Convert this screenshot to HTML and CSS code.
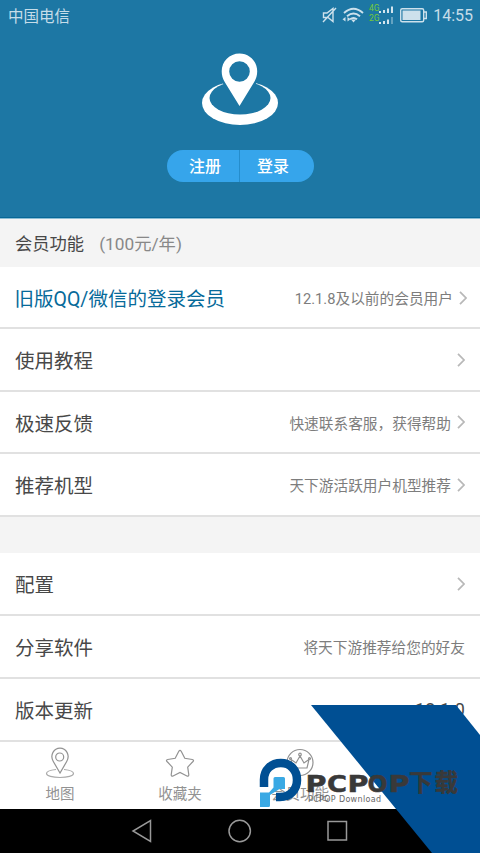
FILE: index.html
```html
<!DOCTYPE html>
<html lang="zh-CN">
<head>
<meta charset="utf-8">
<title>会员功能</title>
<link rel="stylesheet" href="styles.css">
</head>
<body>
<div class="phone">
  <header class="hero">
    <div class="status">
      <span>中国电信</span>
      <svg class="status-icons" width="108" height="32" viewBox="0 0 108 32">
        <g fill="none" stroke="#cde1ec" stroke-width="1.4">
          <path d="M3.500 13h3.500l6-4.500v13l-5-4H3.500zM3 22L16 8"/>
          <path d="M24 13q9.500-8.500 19 0M27 16.300q6.500-5.500 13 0M30 19.300q3.500-2.800 7 0" stroke-width="1.900"/>
        </g>
        <path d="M31 19.500h5l-2.500 3zM25.500 17v4.500l-3-2.300zM27.500 17v4.500l3-2.300z" fill="#cde1ec"/>
        <text x="49" y="10.500" class="net">4G</text>
        <text x="49" y="21" class="net">2G</text>
        <g fill="#d3e5ee">
          <path d="M59 11h2v2h-2zM63 10h2v3h-2zM67 8.500h2V13h-2zM71 6.500h2V13h-2zM59 22h2v2h-2zM63 21h2v3h-2zM67 19.500h2V24h-2z"/>
          <path d="M71 17h2v7h-2z" opacity=".4"/>
        </g>
        <rect x="80.700" y="8.700" width="23" height="13" rx="1.500" fill="none" stroke="#cde1ec" stroke-width="1.400"/>
        <path d="M82.500 10.500h18v9.500h-18z" fill="#cde1ec"/>
        <path d="M104 12h2.300v6.500H104" fill="none" stroke="#cde1ec" stroke-width="1.400"/>
      </svg>
      <span class="time">14:55</span>
    </div>
    <svg class="logo" width="76" height="72" viewBox="0 0 76 72">
      <ellipse cx="38" cy="49" rx="38" ry="22" fill="#fff"/>
      <ellipse cx="38" cy="44" rx="30.500" ry="16.500" fill="#1d77a4"/>
      <path d="M37.500-1C26.500-1 18 7.500 18 18c0 4 1 7.500 3 11.500L37.500 56 54 29.500c2-4 3-7.500 3-11.500C57 7.500 48.500-1 37.500-1z" fill="#1d77a4"/>
      <path fill-rule="evenodd" d="M37.500-.5C27.500-.5 19.700 7.500 19.700 17.200c0 4 1.100 7.500 3 10.800L37.500 52 52.200 28c1.900-3.300 3-6.800 3-10.800C55.200 7.500 47.500-.5 37.500-.5zm0 7.700a10.300 10.300 0 1 1 0 20.600 10.300 10.300 0 0 1 0-20.600z" fill="#fff"/>
    </svg>
    <div class="auth"><span>注册</span><span>登录</span></div>
  </header>

  <div class="section"><b>会员功能</b><span>(100元/年)</span></div>
  <main>
    <div class="row first">
      <span class="name link">旧版QQ/微信的登录会员</span><span class="detail">12.1.8及以前的会员用户</span>
      <svg class="chev" width="8" height="14" viewBox="0 0 8 14"><path d="M1 .8l6 6.200-6 6.200"/></svg>
    </div>
    <div class="row">
      <span class="name">使用教程</span><span class="detail"></span>
      <svg class="chev" width="8" height="14" viewBox="0 0 8 14"><path d="M1 .8l6 6.200-6 6.200"/></svg>
    </div>
    <div class="row short">
      <span class="name">极速反馈</span><span class="detail">快速联系客服，获得帮助</span>
      <svg class="chev" width="8" height="14" viewBox="0 0 8 14"><path d="M1 .8l6 6.200-6 6.200"/></svg>
    </div>
    <div class="row">
      <span class="name">推荐机型</span><span class="detail">天下游活跃用户机型推荐</span>
      <svg class="chev" width="8" height="14" viewBox="0 0 8 14"><path d="M1 .8l6 6.200-6 6.200"/></svg>
    </div>
    <div class="gap"></div>
    <div class="row">
      <span class="name">配置</span><span class="detail"></span>
      <svg class="chev" width="8" height="14" viewBox="0 0 8 14"><path d="M1 .8l6 6.200-6 6.200"/></svg>
    </div>
    <div class="row"><span class="name">分享软件</span><span class="detail">将天下游推荐给您的好友</span></div>
    <div class="row"><span class="name">版本更新</span><span class="detail version">12.1.0</span></div>
  </main>

  <nav class="tabs">
    <div class="tab">
      <svg width="30" height="32" viewBox="0 0 30 32">
        <path d="M11 22.500c-5 .5-9.500 2-9.500 4 0 2.300 6 4 13.500 4s13.500-1.700 13.500-4c0-2-4.500-3.500-9.500-4" stroke="#aaa"/>
        <path d="M15 26L8.300 14.500C4.500 8 9 1.200 15 1.200S25.500 8 21.700 14.500z"/><circle cx="14.700" cy="10" r="4"/>
      </svg>
      <span>地图</span>
    </div>
    <div class="tab">
      <svg width="30" height="32" viewBox="0 0 30 32">
        <path d="M13.800 4.300q1.200-2 2.400 0l3.600 7 7.500 1.200q2 .5.700 2l-5.300 5.600 1.100 7.600q0 2-1.900 1.300L15 25.500 8.100 29q-1.900.7-1.900-1.300l1.100-7.600L2 14.500q-1.300-1.500.7-2l7.500-1.200z"/>
      </svg>
      <span>收藏夹</span>
    </div>
    <div class="tab">
      <svg width="30" height="32" viewBox="0 0 30 32">
        <circle cx="15" cy="15.500" r="13"/>
        <path d="M8 21L6 12.500l5 3.500 4-7 4 7 5-3.500L22 21z"/><circle cx="15" cy="7.500" r="1.300"/><circle cx="5.500" cy="11.500" r="1"/><circle cx="24.500" cy="11.500" r="1"/>
      </svg>
      <span>会员功能</span>
    </div>
    <div class="tab"></div>
  </nav>
  <footer class="keys">
    <svg width="22" height="24" viewBox="0 0 22 24"><path d="M19.500 1.500v21L2 12z"/></svg>
    <svg width="24" height="24" viewBox="0 0 24 24"><circle cx="11.700" cy="12" r="10.700"/></svg>
    <svg width="22" height="22" viewBox="0 0 22 22"><rect x="1" y="1.500" width="18.500" height="18.500"/></svg>
  </footer>

  <svg class="brand" width="230" height="148" viewBox="250 705 230 148">
    <path d="M311 705h145l24 30v118h-48z" fill="#004f93"/>
    <path d="M264 787v-7.500c0-10 7.500-16.500 16.800-16.500 9.700 0 16.200 7 16.200 17s-7 17-17 17h-4" fill="none" stroke="#004f93" stroke-width="8.500"/>
    <path d="M275 777h8.500q1.500 0 1.500 1.500V789h-5.500l-9.500 6v10.500q0 1.500-1.500 1.500H260v-14.500h9l4.500-5v-9q0-1.500 1.500-1.500z" fill="#3aa9e4"/>
    <g class="wordmark">
      <text x="305.500" y="792" textLength="21" lengthAdjust="spacingAndGlyphs">P</text>
      <text x="327" y="792" textLength="20" lengthAdjust="spacingAndGlyphs">C</text>
      <text x="347.500" y="792" textLength="21" lengthAdjust="spacingAndGlyphs">P</text>
      <text x="367.500" y="792" textLength="20" lengthAdjust="spacingAndGlyphs">O</text>
      <text x="388.500" y="792" textLength="21" lengthAdjust="spacingAndGlyphs">P</text>
      <text x="409" y="791" class="cjk" textLength="49" lengthAdjust="spacing">下载</text>
    </g>
    <text x="308" y="801.500" class="tagline" textLength="73" lengthAdjust="spacing">PCPOP Download</text>
  </svg>
</div>
</body>
</html>
```
FILE: styles.css
```css
* { box-sizing: border-box; }
body { margin: 0; font-family: Roboto, "Noto Sans CJK SC", sans-serif; color: #484848; }
.phone { position: relative; width: 480px; height: 853px; overflow: hidden; background: #fff; display: flex; flex-direction: column; }
.hero { height: 219px; flex: none; background: #1d77a4; border-bottom: 1px solid #8cbdd3; box-shadow: inset 0 -1px #066797; display: flex; flex-direction: column; align-items: center; }
.status { width: 100%; height: 32px; display: flex; align-items: center; padding: 0 7px 2px 8px; font-size: 15.5px; color: #c6dde9; }
.status-icons { margin-left: auto; margin-right: 5px; position: relative; top: 1px; }
.time { font-size: 16px; }
.net { font: 8.5px Roboto, sans-serif; fill: #72c83c; }
.logo { margin-top: 22px; overflow: visible; }
.auth { display: flex; width: 147px; height: 32px; margin-top: 23.5px; border-radius: 16px; background: #36a5eb; color: #fff; font-size: 16px; font-weight: 500; line-height: 33px; text-align: center; }
.auth span { flex: 1; }
.auth span:first-child { border-right: 1px solid #258dcc; padding-left: 5px; }
.auth span:last-child { padding-right: 7px; }
.section { height: 48px; flex: none; background: #f4f4f4; display: flex; align-items: center; gap: 15px; padding: 0 15px 1px; font-size: 17.3px; color: #888; }
.section b { font-weight: 400; color: #484848; }
main { flex: none; }
.row { height: 63px; display: flex; align-items: center; padding: 0 15px; border-bottom: 2px solid #e1e1e1; }
.row.first { height: 62px; padding-right: 13px; padding-left: 14.5px; }
.row.first .chev { margin-top: 1px; }
.row.short { height: 62px; }
.name { font-size: 19.5px; white-space: nowrap; }
.link { color: #066a9a; }
.detail { margin-left: auto; font-size: 14.7px; color: #7d7d7d; white-space: nowrap; }
.version { font-size: 18px; color: #484848; }
.chev { margin-left: 6px; fill: none; stroke: #b8b8b8; stroke-width: 1.7; }
.gap { height: 36px; background: #f4f4f4; }
.tabs { height: 67px; flex: none; display: grid; grid-template-columns: repeat(4, 1fr); }
.tab { display: flex; flex-direction: column; align-items: center; padding-top: 5px; font-size: 14.5px; line-height: 21px; color: #929292; gap: 5px; }
.tab svg { fill: none; stroke: #929292; stroke-width: 1.2; }
.keys { flex: 1; background: #000; display: flex; align-items: center; justify-content: center; gap: 75px; }
.keys svg { fill: none; stroke: #999; stroke-width: 1.5; }
.brand { position: absolute; right: 0; bottom: 0; }
.wordmark { font: 700 23px "DejaVu Sans", sans-serif; fill: #393939; stroke: #393939; stroke-width: .5; }
.cjk { font: 700 23.5px "Noto Sans CJK SC", sans-serif; }
.tagline { font: 8px "DejaVu Sans", sans-serif; fill: #666; }
```
